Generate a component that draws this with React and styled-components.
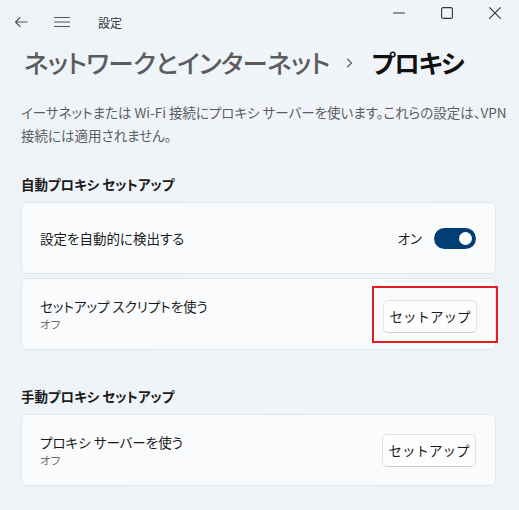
import styled, { createGlobalStyle } from 'styled-components';

const GlobalStyle = createGlobalStyle`
  html, body {
    margin: 0;
    padding: 0;
    background: #eff4f9;
  }
  body {
    font-family: "Noto Sans CJK JP", "Noto Sans", sans-serif;
    color: #1b1b1b;
    font-feature-settings: "palt";
  }
`;

const Window = styled.div`
  width: 519px;
  height: 510px;
  overflow: hidden;
  background: linear-gradient(100deg, #eef3f8 0%, #f1f5f9 60%, #eef3f8 100%);
`;

const TitleBar = styled.div`
  display: flex;
  align-items: flex-start;
  height: 44px;
`;

const NavGroup = styled.div`
  display: flex;
  align-items: center;
  height: 44px;
  flex: 1;
  padding-left: 14px;
`;

const NavButton = styled.span`
  display: flex;
  align-items: center;
  justify-content: center;
  width: ${(p) => p.w || 16}px;
  margin-right: ${(p) => p.gap || 0}px;
  color: #555;
`;

const AppName = styled.span`
  font-size: 12px;
  color: #333;
  padding-top: 1px;
`;

const Caption = styled.div`
  display: flex;
`;

const CaptionButton = styled.span`
  display: flex;
  align-items: center;
  justify-content: center;
  width: 48px;
  height: 25px;
  color: #333;
`;

const Content = styled.div`
  padding: 0 23px 0 21px;
`;

const Heading = styled.h1`
  display: flex;
  align-items: center;
  margin: 0 0 0 3px;
  height: 36px;
  font-size: 25.5px;
  letter-spacing: -0.6px;
  font-weight: 500;
  line-height: 36px;
  white-space: nowrap;
`;

const Crumb = styled.span`
  color: #5c5c5c;
`;

const CrumbSep = styled.span`
  display: flex;
  margin: 2px 19px 0 16px;
  color: #5c5c5c;
`;

const Current = styled.span`
  color: #111;
  font-weight: 700;
  letter-spacing: -1.2px;
`;

const Description = styled.p`
  margin: 21px -20px 0 0;
  font-size: 13.5px;
  line-height: 23px;
  color: #5d5d5d;
  white-space: nowrap;
`;

const SectionTitle = styled.h2`
  margin: ${(p) => p.top}px 0 0;
  font-size: 13.5px;
  font-weight: 700;
  line-height: 20px;
  color: #1b1b1b;
`;

const CardList = styled.div`
  display: flex;
  flex-direction: column;
  gap: 4px;
  margin-top: 8px;
`;

const Card = styled.div`
  display: flex;
  align-items: center;
  justify-content: space-between;
  height: 72px;
  box-sizing: border-box;
  padding: 0 19px 0 18px;
  background: #f9fbfd;
  border: 1px solid #e2e6ea;
  border-radius: 6px;
`;

const Labels = styled.div`
  display: flex;
  flex-direction: column;
`;

const Label = styled.span`
  font-size: 13.5px;
  line-height: 19px;
  color: #1b1b1b;
`;

const SubLabel = styled.span`
  font-size: 11.5px;
  line-height: 16px;
  color: #707070;
`;

const ToggleRow = styled.div`
  display: flex;
  align-items: center;
  gap: 12px;
  font-size: 13.5px;
`;

const Toggle = styled.span`
  position: relative;
  width: 42px;
  height: 21px;
  border-radius: 11px;
  background: #003e73;

  &::after {
    content: "";
    position: absolute;
    right: 4px;
    top: 4px;
    width: 13px;
    height: 13px;
    border-radius: 50%;
    background: #fff;
  }
`;

const Highlight = styled.div`
  display: flex;
  align-items: flex-start;
  margin-right: -22px;
  padding: 12px 0 0 9px;
  width: 126px;
  height: 57px;
  box-sizing: border-box;
  border: 2px solid #e81c24;
`;

const Button = styled.button`
  width: 94px;
  height: 33px;
  box-sizing: border-box;
  background: #fdfdfd;
  border: 1px solid #e3e3e3;
  border-bottom-color: #cfcfcf;
  border-radius: 5px;
  font-family: inherit;
  font-size: 13.5px;
  color: #1b1b1b;
  padding: 0;
`;

function Stroke({ children, w = 16, h = 16, vb = '0 0 16 16' }) {
  return (
    <svg width={w} height={h} viewBox={vb} fill="none" stroke="currentColor" strokeWidth="1.1" strokeLinecap="round" strokeLinejoin="round">
      {children}
    </svg>
  );
}

export default function App() {
  return (
    <Window>
      <GlobalStyle />
      <TitleBar>
        <NavGroup>
          <NavButton w={14} gap={26}>
            <Stroke w={14} h={12} vb="0 0 14 12">
              <path d="M13 6H1.5M6 1.5L1.5 6L6 10.5" />
            </Stroke>
          </NavButton>
          <NavButton w={16} gap={28}>
            <Stroke w={16} h={12} vb="0 0 16 12">
              <path d="M0.5 1.5H15.5M0.5 6H15.5M0.5 10.5H15.5" />
            </Stroke>
          </NavButton>
          <AppName>設定</AppName>
        </NavGroup>
        <Caption>
          <CaptionButton>
            <Stroke w={12} h={12} vb="0 0 12 12">
              <path d="M0.5 6H11.5" />
            </Stroke>
          </CaptionButton>
          <CaptionButton>
            <Stroke w={12} h={12} vb="0 0 12 12">
              <rect x="0.6" y="0.6" width="10.8" height="10.8" rx="1.5" />
            </Stroke>
          </CaptionButton>
          <CaptionButton>
            <Stroke w={12} h={12} vb="0 0 12 12">
              <path d="M0.6 0.6L11.4 11.4M11.4 0.6L0.6 11.4" />
            </Stroke>
          </CaptionButton>
        </Caption>
      </TitleBar>

      <Content>
        <Heading>
          <Crumb>ネットワークとインターネット</Crumb>
          <CrumbSep>
            <Stroke w={7} h={10} vb="0 0 7 10">
              <path d="M1.5 1L5.5 5L1.5 9" />
            </Stroke>
          </CrumbSep>
          <Current>プロキシ</Current>
        </Heading>

        <Description>
          イーサネットまたは Wi-Fi 接続にプロキシ サーバーを使います。これらの設定は、VPN
          <br />
          接続には適用されません。
        </Description>

        <SectionTitle top={27}>自動プロキシ セットアップ</SectionTitle>
        <CardList>
          <Card>
            <Label>設定を自動的に検出する</Label>
            <ToggleRow>
              オン
              <Toggle />
            </ToggleRow>
          </Card>
          <Card>
            <Labels>
              <Label>セットアップ スクリプトを使う</Label>
              <SubLabel>オフ</SubLabel>
            </Labels>
            <Highlight>
              <Button>セットアップ</Button>
            </Highlight>
          </Card>
        </CardList>

        <SectionTitle top={36}>手動プロキシ セットアップ</SectionTitle>
        <CardList>
          <Card>
            <Labels>
              <Label>プロキシ サーバーを使う</Label>
              <SubLabel>オフ</SubLabel>
            </Labels>
            <Button>セットアップ</Button>
          </Card>
        </CardList>
      </Content>
    </Window>
  );
}
